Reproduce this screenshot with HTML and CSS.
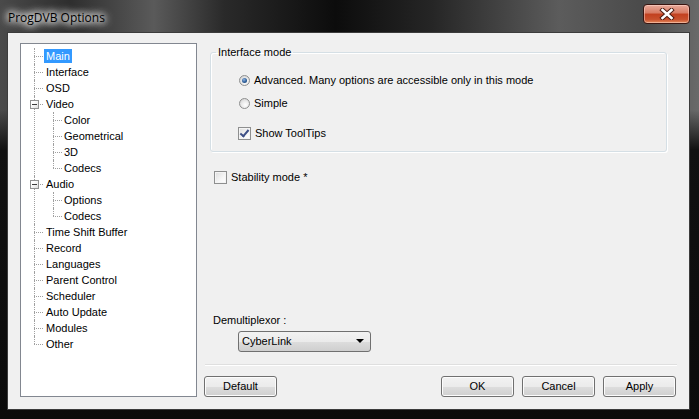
FILE: index.html
```html
<!DOCTYPE html>
<html>
<head>
	<meta charset="utf-8">
	<title>ProgDVB Options</title>
	<link rel="stylesheet" href="styles.css">
</head>
<body>

	<div class="window">
		<div class="caption">
			<span class="caption-title">ProgDVB Options</span>
			<button class="close-btn" aria-label="Close">
				<svg width="16" height="12" viewBox="0 0 16 12">
					<path d="M3.5 2 L12.5 10 M12.5 2 L3.5 10" stroke="#4a1a10" stroke-width="4.4" stroke-linecap="square"/>
					<path d="M3.5 2 L12.5 10 M12.5 2 L3.5 10" stroke="#fff" stroke-width="2.6" stroke-linecap="square"/>
				</svg>
			</button>
		</div>

		<div class="client">
			<!-- дерево разделов настроек -->
			<div class="tree-box">
				<ul class="tree">
					<li><span class="node selected">Main</span></li>
					<li><span class="node">Interface</span></li>
					<li><span class="node">OSD</span></li>
					<li><span class="toggle"></span><span class="node">Video</span>
						<ul>
							<li><span class="node">Color</span></li>
							<li><span class="node">Geometrical</span></li>
							<li><span class="node">3D</span></li>
							<li><span class="node">Codecs</span></li>
						</ul>
					</li>
					<li><span class="toggle"></span><span class="node">Audio</span>
						<ul>
							<li><span class="node">Options</span></li>
							<li><span class="node">Codecs</span></li>
						</ul>
					</li>
					<li><span class="node">Time Shift Buffer</span></li>
					<li><span class="node">Record</span></li>
					<li><span class="node">Languages</span></li>
					<li><span class="node">Parent Control</span></li>
					<li><span class="node">Scheduler</span></li>
					<li><span class="node">Auto Update</span></li>
					<li><span class="node">Modules</span></li>
					<li><span class="node">Other</span></li>
				</ul>
			</div>

			<!-- страница Main -->
			<div class="page">
				<fieldset class="group">
					<legend>Interface mode</legend>
					<label class="option first"><span class="radio checked"></span>Advanced. Many options are accessible only in this mode</label>
					<label class="option"><span class="radio"></span>Simple</label>
					<label class="option tips"><span class="check checked"></span>Show ToolTips</label>
				</fieldset>

				<label class="option stability"><span class="check"></span>Stability mode *</label>

				<div class="spacer"></div>

				<div class="demux-label">Demultiplexor :</div>
				<div class="combo">
					<span>CyberLink</span>
					<span class="combo-arrow"></span>
				</div>

				<div class="separator"></div>

				<div class="buttons">
					<button class="btn">Default</button>
					<div class="buttons-right">
						<button class="btn">OK</button>
						<button class="btn">Cancel</button>
						<button class="btn">Apply</button>
					</div>
				</div>
			</div>
		</div>
	</div>

</body>
</html>
```

FILE: styles.css
```css
body {
	margin: 0;
	background: #000;
	font-family: "Liberation Sans", Arial, sans-serif;
	font-size: 11px;
	color: #000;
}

.window {
	width: 699px;
	height: 419px;
	display: flex;
	flex-direction: column;
	background:
		linear-gradient(to bottom, rgba(0,0,0,0) 0, rgba(0,0,0,0) 110px, #111 150px, #0b0b0b 100%),
		linear-gradient(to right, #4a4a4a 0, #2e2e2e 10%, #5a5a5a 22%, #2a2a2a 32%, #0c0c0c 48%, #262626 62%, #5c5c5c 80%, #4a4a4a 92%, #6a6a6a 100%);
}

/* заголовок окна */
.caption {
	height: 32px;
	display: flex;
	align-items: flex-start;
	justify-content: space-between;
}

.caption-title {
	margin: 11px 0 0 8px;
	font-family: "Open Sans", "Liberation Sans", sans-serif;
	font-size: 12px;
	line-height: 14px;
	color: #000;
	text-shadow: 0 0 6px #fff, 0 0 8px #fff, 0 0 10px rgba(255,255,255,0.9), 0 0 12px rgba(255,255,255,0.8);
}

.close-btn {
	width: 47px;
	height: 20px;
	margin: 4px 9px 0 0;
	padding: 0;
	display: flex;
	align-items: center;
	justify-content: center;
	border: 1px solid #3a1510;
	border-radius: 4px;
	background: linear-gradient(to bottom, #e9a99a 0, #d77a62 45%, #c2401f 50%, #c8502d 80%, #e38a5c 100%);
	box-shadow: inset 0 0 0 1px rgba(255,220,210,0.5);
}

/* рабочая область */
.client {
	flex: 1;
	margin: 0 9px 9px 7px;
	box-sizing: border-box;
	border: 1px solid #3c3c3c;
	background: #f0f0f0;
	padding: 10px 12px 12px 12px;
	display: flex;
	gap: 7px;
}

.tree-box {
	width: 177px;
	box-sizing: border-box;
	border: 1px solid #828790;
	background: #fff;
}

.tree, .tree ul {
	list-style: none;
	margin: 0;
	padding: 0;
}

.tree {
	padding-top: 4px;
}

.tree li {
	position: relative;
	padding-left: 23px;
}

/* линии дерева */
.tree li::before {
	content: "";
	position: absolute;
	left: 13px;
	top: 8px;
	width: 9px;
	border-top: 1px dotted #a0a0a0;
}

.tree li::after {
	content: "";
	position: absolute;
	left: 13px;
	top: 0;
	bottom: 0;
	border-left: 1px dotted #a0a0a0;
}

.tree li:last-child::after {
	bottom: auto;
	height: 8px;
}

.tree ul li {
	padding-left: 18px;
}

.tree ul li::before,
.tree ul li::after {
	left: 9px;
}

.node {
	display: inline-block;
	height: 14px;
	line-height: 14px;
	margin: 1px 0;
	padding: 0 2px;
	white-space: nowrap;
}

.node.selected {
	background: #3399ff;
	color: #fff;
}

.toggle {
	position: absolute;
	left: 9px;
	top: 4px;
	width: 7px;
	height: 7px;
	border: 1px solid #919191;
	background: linear-gradient(to bottom right, #fff 30%, #dedede 100%);
	z-index: 1;
}

.toggle::after {
	content: "";
	position: absolute;
	left: 1px;
	top: 3px;
	width: 5px;
	height: 1px;
	background: #3a3a3a;
}

/* правая часть */
.page {
	flex: 1;
	display: flex;
	flex-direction: column;
}

.group {
	margin: 3px 10px 0 6px;
	padding: 0 0 10px 27px;
	border: 1px solid #d5dfe5;
	border-radius: 3px;
	box-shadow: inset 1px 1px 0 #fff, 1px 1px 0 #fff;
}

.group legend {
	margin-left: -22px;
	padding: 0 2px;
	line-height: 13px;
}

.option {
	display: flex;
	align-items: center;
	gap: 4px;
	height: 16px;
	line-height: 16px;
	margin-top: 7px;
}

.option.first {
	margin-top: 13px;
}

.option.tips {
	margin-top: 14px;
}

.option.stability {
	margin: 17px 0 0 10px;
}

.radio {
	width: 11px;
	height: 11px;
	margin-left: 1px;
	box-sizing: border-box;
	border: 1px solid #8e8f8f;
	border-radius: 50%;
	background: radial-gradient(circle at 60% 65%, #fff 0, #e8e8e8 50%, #c8c8c8 100%);
	display: flex;
	align-items: center;
	justify-content: center;
}

.radio.checked::after {
	content: "";
	width: 5px;
	height: 5px;
	border-radius: 50%;
	background: radial-gradient(circle at 40% 35%, #8fb3e0 0, #2d5f9a 55%, #15385f 100%);
}

.check {
	width: 13px;
	height: 13px;
	box-sizing: border-box;
	border: 1px solid #8e8f8f;
	background: linear-gradient(to bottom right, #dcdcdc 0, #f6f6f6 60%, #fff 100%);
	box-shadow: inset 0 0 0 1px #f4f4f4;
	position: relative;
}

.check.checked::after {
	content: "";
	position: absolute;
	left: 3px;
	top: 0px;
	width: 3px;
	height: 7px;
	border: solid #3d4f86;
	border-width: 0 2px 2px 0;
	transform: rotate(40deg);
}

.spacer {
	flex: 1;
}

.demux-label {
	height: 14px;
	line-height: 14px;
	padding-left: 9px;
}

.combo {
	width: 133px;
	height: 21px;
	box-sizing: border-box;
	margin: 4px 0 0 34px;
	padding: 0 6px 1px 3px;
	display: flex;
	align-items: center;
	justify-content: space-between;
	border: 1px solid #707070;
	border-radius: 3px;
	background: linear-gradient(to bottom, #f2f2f2 0, #ebebeb 50%, #dddddd 51%, #cfcfcf 100%);
}

.combo-arrow {
	width: 0;
	height: 0;
	border-left: 4px solid transparent;
	border-right: 4px solid transparent;
	border-top: 4px solid #000;
}

.separator {
	height: 1px;
	margin: 12px 0 0 1px;
	background: #dfdfdf;
	border-bottom: 1px solid #fff;
}

.buttons {
	display: flex;
	justify-content: space-between;
	margin: 10px 1px 0 0;
}

.buttons-right {
	display: flex;
	gap: 8px;
}

.btn {
	width: 73px;
	height: 21px;
	padding: 0 0 2px 0;
	font-family: "Liberation Sans", Arial, sans-serif;
	font-size: 11px;
	color: #000;
	border: 1px solid #707070;
	border-radius: 3px;
	background: linear-gradient(to bottom, #f2f2f2 0, #ebebeb 50%, #dddddd 51%, #cfcfcf 100%);
	box-shadow: inset 0 0 0 1px #fcfcfc;
}
```
